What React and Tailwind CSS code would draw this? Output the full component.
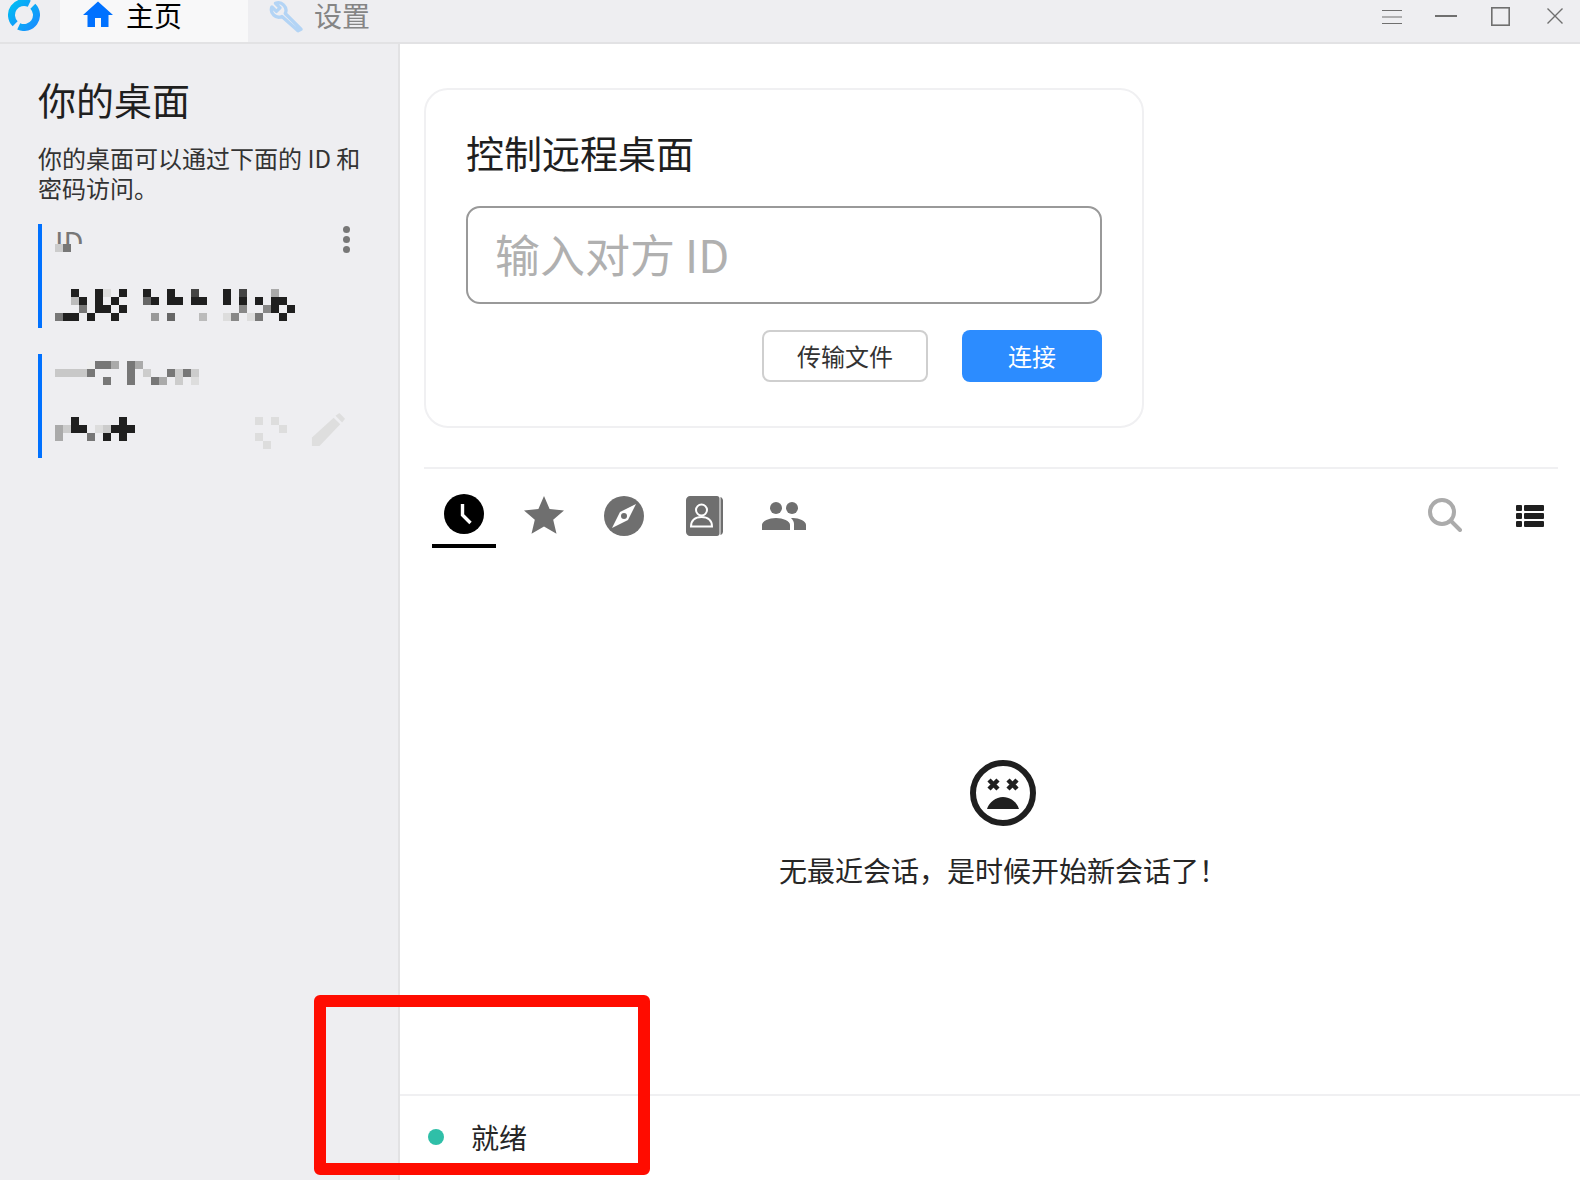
// App.jsx - remote desktop home screen
import React from 'react';

const D = '#1f1f1f';

// mosaic cells: [col, row, colour], each cell is 8px square
const idValue = [
  [2,0,D],[5,0,D],[6,0,'#ddd'],[8,0,D],[11,0,D],[14,0,D],[17,0,'#444'],[21,0,D],[23,0,'#444'],[27,0,'#aaa'],
  [2,1,'#bbb'],[3,1,D],[5,1,D],[7,1,D],[11,1,'#666'],[12,1,D],[14,1,D],[15,1,D],[17,1,D],[18,1,D],[21,1,D],[23,1,D],[25,1,D],[27,1,D],[28,1,D],
  [3,2,'#777'],[5,2,D],[6,2,D],[8,2,D],[23,2,'#888'],[26,2,'#888'],[27,2,D],[29,2,D],
  [0,3,'#777'],[1,3,D],[2,3,D],[4,3,D],[7,3,D],[12,3,'#999'],[14,3,'#666'],[18,3,'#bbb'],[21,3,'#ddd'],[22,3,'#888'],[24,3,'#ddd'],[25,3,'#777'],[28,3,D],
];
const pwLabel = [
  [4,0,'#eee'],[5,0,'#777'],[6,0,'#777'],[7,0,'#aaa'],[9,0,'#777'],[10,0,'#aaa'],
  [0,1,'#c8c8c8'],[1,1,'#c8c8c8'],[2,1,'#c8c8c8'],[3,1,'#c8c8c8'],[4,1,'#777'],[9,1,'#777'],[11,1,'#ccc'],[14,1,'#777'],[15,1,'#ccc'],[16,1,'#777'],[17,1,'#ccc'],
  [6,2,'#777'],[9,2,'#777'],[12,2,'#777'],[13,2,'#aaa'],[15,2,'#ccc'],[17,2,'#ddd'],
];
const pwValue = [
  [2,0,D],[8,0,D],
  [0,1,'#aaa'],[1,1,'#ccc'],[2,1,D],[3,1,D],[5,1,'#ddd'],[6,1,'#ccc'],[7,1,D],[8,1,D],[9,1,D],
  [0,2,'#aaa'],[4,2,'#777'],[6,2,D],[8,2,D],
];
const refreshCells = [
  [0,0,'#ddd'],[2,0,'#ddd'],[3,1,'#ddd'],[0,2,'#ddd'],[1,3,'#ddd'],
];
const idLabelCells = [[0,0,'#ccc'],[1,0,'#777']];

const Mosaic = ({ cells, cols, rows }) => (
  <svg width={cols * 8} height={rows * 8} className="block shrink-0">
    {cells.map(([c, r, fill]) => (
      <rect key={`${c}-${r}`} x={c * 8} y={r * 8} width="8" height="8" fill={fill} />
    ))}
  </svg>
);

const Logo = () => (
  <svg width="32" height="32" viewBox="0 0 32 32" className="block -mt-[1px]">
    <defs>
      <linearGradient id="logoGrad" x1="0" y1="0" x2="1" y2="1">
        <stop offset="0" stopColor="#00bdf2" />
        <stop offset="1" stopColor="#1a8cff" />
      </linearGradient>
    </defs>
    <g fill="none" stroke="url(#logoGrad)" strokeWidth="7">
      <path d="M21.28 4.67A12.500 12.500 0 0 0 7.16 24.84" />
      <path d="M10.72 27.33A12.500 12.500 0 0 0 24.84 7.16" />
    </g>
  </svg>
);

const Home = () => (
  <svg width="36" height="36" viewBox="0 0 24 24" fill="#0071ff" className="block -mt-[3px]"><path d="M10 20v-6h4v6h5v-8h3L12 3 2 12h3v8z" /></svg>
);

const Wrench = () => (
  <svg width="36" height="36" viewBox="0 0 24 24" fill="none" stroke="#b3d4f5" strokeWidth="2.2" strokeLinejoin="round" strokeLinecap="round" className="block -mt-[3px]">
    <path d="M22 21.5 11.5 11a5 5 0 0 0-1-5.600A5 5 0 0 0 5 4.200l3 3-2.400 2.400-3-3a5 5 0 0 0 1.200 5.400 5 5 0 0 0 5.500 1L20 22.500z" />
  </svg>
);

const WindowBtns = () => (
  <div className="flex items-start text-[#6f6f6f]">
    <svg width="20" height="14" className="mt-[10px] mr-[33px]" stroke="currentColor" strokeWidth="1"><path d="M0 .5h20M0 7h20M0 13.500h20" /></svg>
    <svg width="22" height="2" className="mt-[15px] mr-[34px]" fill="currentColor"><rect width="22" height="2" /></svg>
    <svg width="19" height="19" className="mt-[7px] mr-[37px]" fill="none" stroke="currentColor" strokeWidth="1.600"><rect x=".8" y=".8" width="17.400" height="17.400" /></svg>
    <svg width="16" height="16" className="mt-[8px] mr-[17px]" stroke="currentColor" strokeWidth="1.400"><path d="M.5.5l15 15M15.500.5l-15 15" /></svg>
  </div>
);

const Clock = () => (
  <svg width="40" height="40" viewBox="0 0 40 40" className="block">
    <circle cx="20" cy="20" r="20" fill="#000" />
    <path d="M18.500 10v11l8 8" fill="none" stroke="#fff" strokeWidth="3.400" />
  </svg>
);
const Star = () => (
  <svg width="40" height="38" viewBox="0 0 40 38" fill="#6f6f6f" className="block"><path d="M20 0l5.600 13 14.400 1.400-10.800 9.400 3.300 14L20 30.400 7.500 37.800l3.300-14L0 14.400 14.400 13z" /></svg>
);
const Compass = () => (
  <svg width="40" height="40" viewBox="0 0 40 40" className="block">
    <circle cx="20" cy="20" r="20" fill="#6f6f6f" />
    <path d="M32 8 24 24 8 32l8-16z" fill="#fff" />
    <circle cx="20" cy="20" r="3" fill="#6f6f6f" />
  </svg>
);
const Book = () => (
  <svg width="37" height="40" viewBox="0 0 37 40" className="block">
    <path d="M4 0h27c1.500 0 2.500 1 2.500 2.500v35c0 1.500-1 2.500-2.500 2.500H4c-2 0-4-2-4-4V4c0-2 2-4 4-4z" fill="#6f6f6f" />
    <path d="M34.500 1c1.500.5 2.500 2 2.500 3.500v31c0 1.500-1 3-2.500 3.500z" fill="#6f6f6f" />
    <circle cx="15.500" cy="14" r="5.500" fill="none" stroke="#fff" strokeWidth="2" />
    <path d="M5 30.500c0-6 4-9.500 10.500-9.500S26 24.500 26 30.500z" fill="none" stroke="#fff" strokeWidth="2" />
  </svg>
);
const People = () => (
  <svg width="44" height="28" viewBox="0 0 44 28" fill="#6f6f6f" className="block">
    <circle cx="14" cy="6" r="6" />
    <circle cx="30" cy="6" r="6" />
    <path d="M0 28v-5c0-4 7-7 14-7s14 3 14 7v5z" />
    <path d="M31 16c6 0 13 3 13 7v5H32v-6c0-2-1-4-3-6z" />
  </svg>
);
const Search = () => (
  <svg width="34" height="34" viewBox="0 0 34 34" fill="none" stroke="#ababab" strokeWidth="4" strokeLinecap="round" className="block">
    <circle cx="14" cy="14" r="12" />
    <path d="M23 23l9 9" />
  </svg>
);
const ListIcon = () => (
  <svg width="28" height="22" viewBox="0 0 28 22" fill="#1f1f1f" className="block">
    <rect width="6" height="6" rx="1" /><rect x="8" width="20" height="6" rx="1" />
    <rect y="8" width="6" height="6" rx="1" /><rect x="8" y="8" width="20" height="6" rx="1" />
    <rect y="16" width="6" height="6" rx="1" /><rect x="8" y="16" width="20" height="6" rx="1" />
  </svg>
);
const SadFace = () => (
  <svg width="66" height="68" viewBox="0 0 66 68" fill="none" className="block">
    <circle cx="33" cy="34" r="30" stroke="#1f1f1f" strokeWidth="6" />
    <path d="M19 21l9 9M28 21l-9 9M38 21l9 9M47 21l-9 9" stroke="#1f1f1f" strokeWidth="4.500" />
    <path d="M17 50c2-7 9-12 16-12s14 5 16 12z" fill="#1f1f1f" />
  </svg>
);
const Pencil = () => (
  <svg width="34" height="34" viewBox="0 0 36 36" fill="#dedede" className="block">
    <path d="M1 26 24 5l7 7-22 23H1z" />
    <path d="M26 3l4-3 6 6-3 4z" />
  </svg>
);

const Sidebar = () => (
  <aside className="w-[400px] shrink-0 bg-[#eeeef1] border-r-2 border-[#e2e2e4] pl-[38px] pr-[30px] pt-[29px]">
    <h1 className="text-[38px] leading-[52px] text-[#1f1f1f]">你的桌面</h1>
    <p className="mt-[18px] text-[24px] leading-[30px] text-[#333] w-[330px]">你的桌面可以通过下面的 ID 和密码访问。</p>
    <div className="mt-[21px] h-[104px] border-l-4 border-[#0071ff] pl-[13px] relative">
      <div className="h-[20px] pt-[2px] overflow-hidden text-[#777] text-[29px] leading-[29px]">ID</div>
      <div className="absolute left-[13px] top-[20px]"><Mosaic cells={idLabelCells} cols={2} rows={1} /></div>
      <div className="absolute right-[18px] top-[2px] flex flex-col gap-[3px]">
        <span className="w-[7px] h-[7px] rounded-full bg-[#777]" />
        <span className="w-[7px] h-[7px] rounded-full bg-[#777]" />
        <span className="w-[7px] h-[7px] rounded-full bg-[#777]" />
      </div>
      <div className="mt-[45px]"><Mosaic cells={idValue} cols={30} rows={4} /></div>
    </div>
    <div className="mt-[26px] h-[104px] border-l-4 border-[#0071ff] pl-[13px]">
      <div className="pt-[7px]"><Mosaic cells={pwLabel} cols={18} rows={3} /></div>
      <div className="mt-[32px] flex items-start">
        <Mosaic cells={pwValue} cols={10} rows={3} />
        <div className="ml-[120px]"><Mosaic cells={refreshCells} cols={4} rows={4} /></div>
        <div className="ml-[24px] -mt-[4px]"><Pencil /></div>
      </div>
    </div>
  </aside>
);

export default function App() {
  return (
    <div className="relative w-[1580px] h-[1180px] flex flex-col overflow-hidden bg-white font-['Noto_Sans_CJK_SC','Liberation_Sans',sans-serif]">
      <header className="h-[44px] shrink-0 flex justify-between bg-[#eeeef1] border-b-2 border-[#e2e2e4]">
        <div className="flex">
          <div className="w-[60px] pl-[8px]"><Logo /></div>
          <div className="w-[188px] h-[42px] bg-[#f8f8f9] flex items-start pl-[20px] gap-[10px] text-[28px] leading-[30px] text-black">
            <Home /><span>主页</span>
          </div>
          <div className="flex items-start pl-[20px] gap-[10px] text-[28px] leading-[30px] text-[#858585] h-[42px]">
            <Wrench /><span>设置</span>
          </div>
        </div>
        <WindowBtns />
      </header>

      <div className="flex-1 flex min-h-0">
        <Sidebar />
        <main className="flex-1 flex flex-col min-w-0">
          <div className="flex-1 pl-[24px] pr-[22px] pt-[44px]">
            <section className="w-[720px] h-[340px] border-2 border-[#f0f0f2] rounded-[24px] px-[40px] pt-[32px]">
              <h2 className="text-[38px] leading-[60px] text-[#1f1f1f]">控制远程桌面</h2>
              <div className="mt-[24px] h-[98px] border-2 border-[#999] rounded-[14px] flex items-center pl-[27px] pb-[2px] text-[45px] text-[#b0b0b0]">输入对方 ID</div>
              <div className="mt-[26px] flex justify-end gap-[34px]">
                <button className="w-[166px] h-[52px] border-2 border-[#cfcfcf] rounded-[8px] text-[24px] text-[#333] bg-white">传输文件</button>
                <button className="w-[140px] h-[52px] rounded-[8px] text-[24px] text-white bg-[#2c8cff]">连接</button>
              </div>
            </section>
            <div className="mt-[39px] border-t-2 border-[#f0f0f2] h-[80px] flex items-start pt-[25px]">
              <div className="w-[64px] ml-[8px] flex justify-center relative">
                <Clock />
                <span className="absolute left-0 right-0 top-[50px] h-[4px] bg-black" />
              </div>
              <div className="ml-[28px] pt-[2px]"><Star /></div>
              <div className="ml-[40px] pt-[2px]"><Compass /></div>
              <div className="ml-[42px] pt-[2px]"><Book /></div>
              <div className="ml-[39px] pt-[8px]"><People /></div>
              <div className="ml-auto flex items-start gap-[54px] pr-[14px]">
                <div className="pt-[4px]"><Search /></div>
                <div className="pt-[11px]"><ListIcon /></div>
              </div>
            </div>
            <div className="mt-[212px] flex flex-col items-center pl-[24px]">
              <SadFace />
              <p className="mt-[24px] text-[28px] leading-[38px] text-[#262626]">无最近会话，是时候开始新会话了！</p>
            </div>
          </div>
          <footer className="h-[86px] shrink-0 border-t-2 border-[#f0f0f2] flex items-center pl-[28px] gap-[27px] pb-[2px]">
            <span className="w-[16px] h-[16px] rounded-full bg-[#2fbfa8]" />
            <span className="text-[28px] text-[#262626]">就绪</span>
          </footer>
        </main>
      </div>

      {/* annotation frame drawn over the screenshot */}
      <div className="absolute left-[314px] top-[995px] w-[336px] h-[180px] border-[12px] border-[#ff0c00] rounded-[6px]" />
    </div>
  );
}
